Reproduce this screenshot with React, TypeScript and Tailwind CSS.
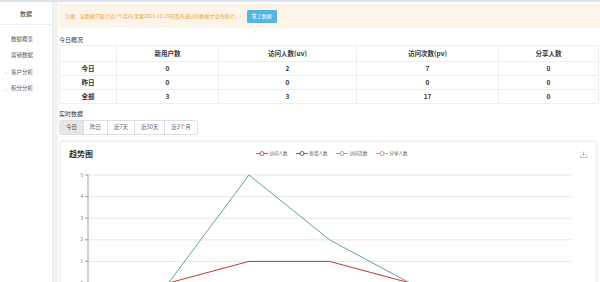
import React from 'react';

const font = { fontFamily: '"Noto Sans CJK SC", "Noto Sans", sans-serif' };

const menu = [
  { label: '数据概览', arrow: false },
  { label: '营销数据', arrow: false },
  { label: '客户分析', arrow: true },
  { label: '积分分析', arrow: true },
];

const rows = [
  ['今日', '0', '2', '7', '0'],
  ['昨日', '0', '0', '0', '0'],
  ['全部', '3', '3', '17', '0'],
];

const tabs = ['今日', '昨日', '近7天', '近30天', '近3个月'];

const legend = [
  { name: '访问人数', color: '#c23531' },
  { name: '新增人数', color: '#2f4554' },
  { name: '访问次数', color: '#61a0a8' },
  { name: '分享人数', color: '#d48265' },
];

// chart geometry (relative to the svg)
const X0 = 27;
const STEP = 80.5;
const Y0 = 117;
const UNIT = 21.6;
const pv = [0, 0, 5, 2, 0, 0, 0];
const uv = [0, 0, 1, 1, 0, 0, 0];

function pts(data: number[]) {
  return data.map((v, i) => `${X0 + i * STEP},${Y0 - v * UNIT}`).join(' ');
}

function Chart() {
  return (
    <svg width="535" height="120" className="block">
      {[1, 2, 3, 4, 5].map((v) => (
        <line key={v} x1={X0} x2={X0 + STEP * 6} y1={Y0 - v * UNIT} y2={Y0 - v * UNIT} stroke="#e6e6e6" strokeWidth="1" />
      ))}
      {[0, 1, 2, 3, 4, 5].map((v) => (
        <g key={v}>
          <line x1={X0 - 3} x2={X0} y1={Y0 - v * UNIT} y2={Y0 - v * UNIT} stroke="#888" strokeWidth="0.8" />
          <text x={X0 - 5} y={Y0 - v * UNIT + 1.5} fontSize="4.5" fill="#666" textAnchor="end">{v}</text>
        </g>
      ))}
      <line x1={X0} x2={X0} y1={Y0 - 5 * UNIT} y2={Y0} stroke="#888" strokeWidth="0.8" />
      <line x1={X0} x2={X0 + STEP * 6} y1={Y0} y2={Y0} stroke="#888" strokeWidth="0.8" />
      {[0, 1, 2, 3, 4, 5, 6].map((i) => (
        <line key={i} x1={X0 + i * STEP} x2={X0 + i * STEP} y1={Y0} y2={Y0 + 3} stroke="#888" strokeWidth="0.8" />
      ))}
      <polyline points={pts(uv)} fill="none" stroke="#c23531" strokeWidth="1" />
      <polyline points={pts(pv)} fill="none" stroke="#61a0a8" strokeWidth="1" />
    </svg>
  );
}

export default function App() {
  return (
    <div style={font} className="w-[600px] h-[282px] overflow-hidden border-t-2 border-[#dde3ea] bg-[#f3f3f3] flex">
      {/* Sidebar */}
      <div className="w-[54px] bg-white border-r border-[#e8e8e8] flex flex-col">
        <div className="h-[23px] pt-[1px] flex items-center justify-center text-[6px] text-[#333] border-b border-[#eee]">数据</div>
        <div className="flex flex-col gap-[10.5px] pt-[11px]">
          {menu.map((m) => (
            <div key={m.label} className="relative pl-[11px] h-[6px] flex items-center text-[5.5px] text-[#555]">
              {m.arrow && <span className="absolute left-[5px] text-[5px] text-[#aaa]">›</span>}
              {m.label}
            </div>
          ))}
        </div>
      </div>

      {/* Main */}
      <div className="flex-1 ml-[5px] bg-white pl-[1px] pt-[2px] flex flex-col">
        <div className="shrink-0 h-[24px] bg-[#fdf4ea] flex items-center pl-[6px] gap-[7px]">
          <span className="text-[5px] text-[#e6a23c]">注意：该数据只统计近3个月内,需要2019-12-19日及有通过的数据才会有统计，</span>
          <span className="h-[13px] px-[5px] flex items-center bg-[#56b5dc] rounded-[1px] text-[5px] text-white">拿上数据</span>
        </div>

        <div className="shrink-0 h-[10px] mt-[6px] flex items-center text-[6px] text-[#333]">今日概况</div>
        <table className="shrink-0 mt-[1px] w-[539px] border-collapse text-[6.5px] text-[#333] table-fixed">
          <colgroup>
            <col className="w-[57px]" />
            <col className="w-[102px]" />
            <col className="w-[138px]" />
            <col className="w-[142px]" />
            <col className="w-[100px]" />
          </colgroup>
          <thead>
            <tr className="h-[16px]">
              {['', '新用户数', '访问人数(uv)', '访问次数(pv)', '分享人数'].map((h, i) => (
                <th key={i} className="border border-[#ebeef5] font-bold text-center p-0">{h}</th>
              ))}
            </tr>
          </thead>
          <tbody>
            {rows.map((r) => (
              <tr key={r[0]} className="h-[14px]">
                {r.map((c, i) => (
                  <td key={i} className="border border-[#ebeef5] font-bold text-center p-0">{c}</td>
                ))}
              </tr>
            ))}
          </tbody>
        </table>

        <div className="shrink-0 h-[10px] mt-[4px] flex items-center text-[6px] text-[#333]">实时数据</div>
        <div className="shrink-0 mt-[2px] flex self-start border border-[#dcdfe6] rounded-[2px] overflow-hidden">
          {tabs.map((t, i) => (
            <div
              key={t}
              className={
                i === 0
                  ? 'h-[13px] px-[6px] flex items-center text-[5.5px] text-[#444] bg-[#e6e6e6]'
                  : 'h-[13px] px-[6px] flex items-center text-[5.5px] text-[#606266] border-l border-[#dcdfe6]'
              }
            >
              {t}
            </div>
          ))}
        </div>

        {/* Trend card */}
        <div className="shrink-0 mt-[6px] ml-[1px] mr-[3px] bg-white border border-[#eceef3] rounded-[2px] shadow-[0_0_3px_rgba(0,0,0,0.08)]">
          <div className="h-[24px] flex items-center px-[8px] relative">
            <span className="text-[8px] font-bold text-[#333]">趋势图</span>
            <div className="flex-1 flex justify-center gap-[8px] -mt-[2px] mr-[10px]">
              {legend.map((l) => (
                <div key={l.name} className="flex items-center gap-[2px]">
                  <svg width="12" height="5">
                    <line x1="0" x2="12" y1="2.5" y2="2.5" stroke={l.color} strokeWidth="0.8" />
                    <circle cx="6" cy="2.5" r="2" fill="white" stroke={l.color} strokeWidth="0.8" />
                  </svg>
                  <span className="text-[4.5px] text-[#555]">{l.name}</span>
                </div>
              ))}
            </div>
            <svg width="7" height="7" viewBox="0 0 14 14" className="mr-[1px]">
              <path d="M7 1v8M4 6l3 3 3-3M1 9v4h12V9" fill="none" stroke="#999" strokeWidth="1.2" />
            </svg>
          </div>
          <Chart />
        </div>
      </div>
    </div>
  );
}
